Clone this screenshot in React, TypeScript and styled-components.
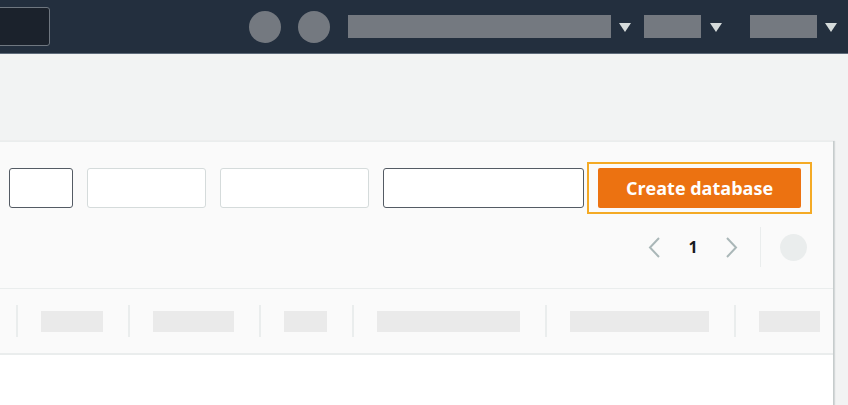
import React from 'react'
import styled, { createGlobalStyle } from 'styled-components'

const GlobalStyle = createGlobalStyle`
    html, body {
        margin: 0;
        padding: 0;
        background: #f2f3f3;
        font-family: 'Open Sans', 'Liberation Sans', sans-serif;
    }
    #root {
        width: 848px;
        height: 405px;
        overflow: hidden;
    }
`

const navMenus = [
    { width: 263, gap: 18, caretGap: 8 },
    { width: 57, gap: 13, caretGap: 9 },
    { width: 67, gap: 28, caretGap: 8 },
]

const columns = [62, 81, 43, 143, 139, 61]

const Caret = () => (
    <svg width="12" height="9" viewBox="0 0 12 9">
        <path d="M0 0 L12 0 L6 9 Z" fill="#d5dbdb" />
    </svg>
)

const Chevron = ({ dir }: { dir: 'left' | 'right' }) => (
    <svg width="12" height="21" viewBox="0 0 12 21">
        <path
            d={dir === 'left' ? 'M11 1 L2 10.5 L11 20' : 'M1 1 L10 10.5 L1 20'}
            fill="none"
            stroke="#aab7b8"
            strokeWidth="2"
        />
    </svg>
)

const App = () => {
    return (
        <>
            <GlobalStyle />
            <TopNav>
                <SearchBox />
                <NavRight>
                    <Avatar />
                    <Avatar $gap={17} />
                    {navMenus.map((menu, i) => (
                        <NavMenu key={`menu${i}`} $gap={menu.gap} $caretGap={menu.caretGap}>
                            <NavLabel $width={menu.width} />
                            <Caret />
                        </NavMenu>
                    ))}
                </NavRight>
            </TopNav>
            <Content>
                <Panel>
                    <FilterRow>
                        <Field $width={64} $dark />
                        <Field $width={119} />
                        <Field $width={149} />
                        <Field $width={201} $dark />
                        <FocusRing>
                            <PrimaryButton type="button">Create database</PrimaryButton>
                        </FocusRing>
                    </FilterRow>
                    <PagerRow>
                        <Pager>
                            <PageArrow><Chevron dir="left" /></PageArrow>
                            <PageNumber>1</PageNumber>
                            <PageArrow><Chevron dir="right" /></PageArrow>
                        </Pager>
                        <Divider />
                        <SettingsDot />
                    </PagerRow>
                    <TableHead>
                        <LeadCell />
                        {columns.map((w, i) => (
                            <HeadCell key={`col${i}`}>
                                <HeadLabel $width={w} />
                            </HeadCell>
                        ))}
                    </TableHead>
                    <TableBody />
                </Panel>
            </Content>
        </>
    )
}

export default App

const TopNav = styled.header`
    display: flex;
    align-items: center;
    height: 53px;
    background: #232f3e;
    border-bottom: 1px solid #5f6b7a;
    padding-right: 11px;
`

const SearchBox = styled.div`
    width: 60px;
    height: 37px;
    margin-left: -12px;
    background: #1b222c;
    border: 1px solid #6f7780;
    border-radius: 3px;
`

const NavRight = styled.div`
    display: flex;
    align-items: center;
    margin-left: auto;
`

const Avatar = styled.div<{ $gap?: number }>`
    width: 32px;
    height: 32px;
    border-radius: 50%;
    background: #747980;
    margin-left: ${props => props.$gap ?? 0}px;
`

const NavMenu = styled.div<{ $gap: number; $caretGap: number }>`
    display: flex;
    align-items: center;
    gap: ${props => props.$caretGap}px;
    margin-left: ${props => props.$gap}px;
    svg { margin-top: 2px; }
`

const NavLabel = styled.div<{ $width: number }>`
    width: ${props => props.$width}px;
    height: 23px;
    background: #747980;
`

const Content = styled.main`
    padding: 87px 15px 0 0;
`

const Panel = styled.section`
    margin-left: -20px;
    background: #fafafa;
    border-top: 1px solid #eaeded;
    box-shadow: 1px 0 0 #c6cccc, 2px 0 1px rgba(0, 28, 36, 0.12);
    overflow: hidden;
    height: 264px;
`

const FilterRow = styled.div`
    display: flex;
    align-items: center;
    gap: 14px;
    padding: 20px 0 0 29px;
`

const Field = styled.div<{ $width: number; $dark?: boolean }>`
    box-sizing: border-box;
    width: ${props => props.$width}px;
    height: 40px;
    background: #fff;
    border: 1px solid ${props => (props.$dark ? '#545b64' : '#d5dbdb')};
    border-radius: 3px;
`

const FocusRing = styled.div`
    display: flex;
    margin: 0 -11px;
    padding: 4px 9px;
    border: 2px solid #f4aa25;
`

const PrimaryButton = styled.button`
    width: 203px;
    height: 40px;
    border: none;
    border-radius: 2px;
    background: #ec7211;
    color: #fff;
    font-family: 'Open Sans', 'Liberation Sans', sans-serif;
    font-size: 18px;
    font-weight: 700;
    padding: 0;
    cursor: pointer;
`

const PagerRow = styled.div`
    display: flex;
    align-items: center;
    justify-content: flex-end;
    height: 40px;
    margin-top: 13px;
    padding-right: 26px;
`

const Pager = styled.div`
    display: flex;
    align-items: center;
`

const PageArrow = styled.span`
    display: flex;
    width: 12px;
    height: 21px;
`

const PageNumber = styled.span`
    width: 66px;
    font-size: 16px;
    font-weight: 700;
    color: #16191f;
    text-align: center;
`

const Divider = styled.div`
    width: 1px;
    height: 40px;
    margin: 0 19px 0 22px;
    background: #eaeded;
`

const SettingsDot = styled.div`
    width: 27px;
    height: 27px;
    border-radius: 50%;
    background: #eaeded;
`

const TableHead = styled.div`
    display: flex;
    align-items: center;
    height: 64px;
    margin-top: 21px;
    border-top: 1px solid #eaeded;
    border-bottom: 2px solid #eaeded;
    white-space: nowrap;
`

const LeadCell = styled.div`
    flex: 0 0 36px;
`

const HeadCell = styled.div`
    display: flex;
    align-items: center;
    flex: 0 0 auto;
    height: 32px;
    padding: 0 25px 0 23px;
    border-left: 2px solid #eaeded;
`

const HeadLabel = styled.div<{ $width: number }>`
    width: ${props => props.$width}px;
    height: 21px;
    background: #eaeaea;
`

const TableBody = styled.div`
    background: #fff;
    height: 60px;
`
